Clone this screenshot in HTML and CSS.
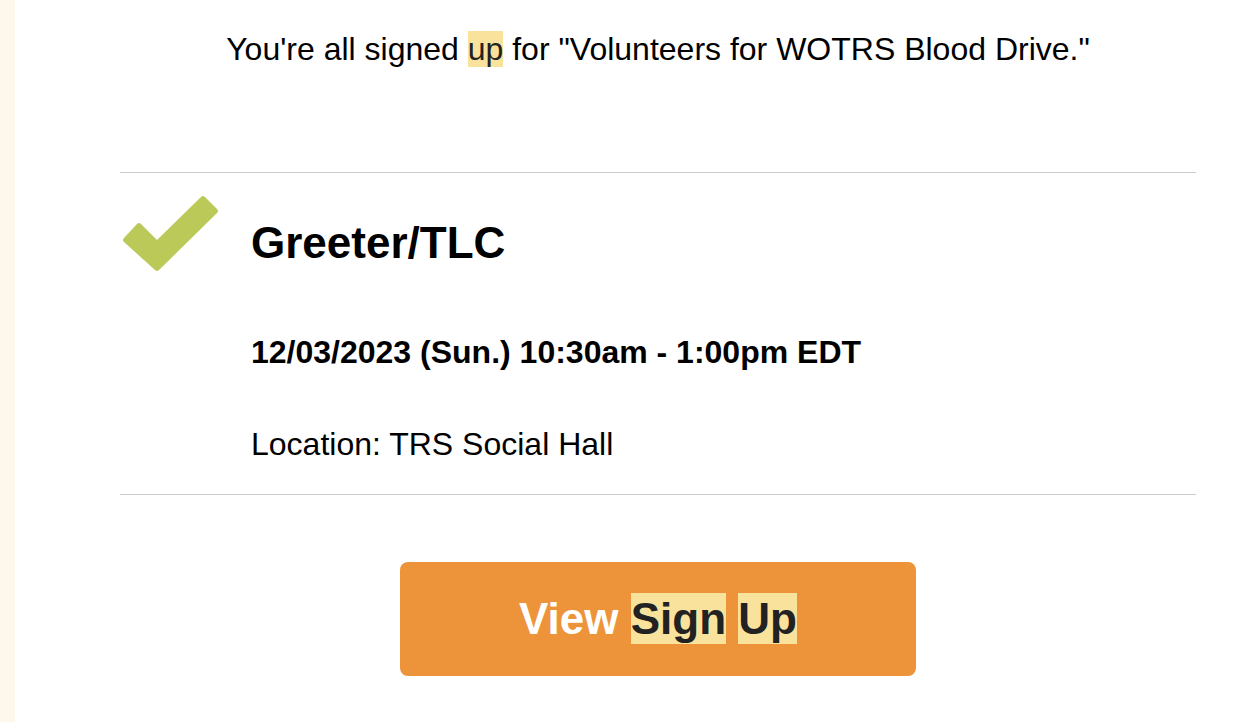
FILE: index.html
```html
<!DOCTYPE html>
<html lang="en">

<head>
  <meta charset="UTF-8">
  <title>Signup Confirmation</title>
  <link rel="stylesheet" href="styles.css">
</head>

<body>
  <div class="page">
    <main class="mail">
      <p class="intro">You're all signed <mark>up</mark> for "Volunteers for WOTRS Blood Drive."</p>

      <section class="slot">
        <div class="check">
          <svg width="100" height="80" viewBox="0 0 100 80">
            <path d="M3 45 L16 31 Q18 29 20 31 L36 47 L80 4 Q82 2 84 4 L96 16 Q98 18 96 20 L38 77 Q36 79 34 77 L3 49 Q1 47 3 45 Z" fill="#bac957" />
          </svg>
        </div>
        <div class="slot-info">
          <h2>Greeter/TLC</h2>
          <p class="when">12/03/2023 (Sun.) 10:30am - 1:00pm EDT</p>
          <p class="where">Location: TRS Social Hall</p>
        </div>
      </section>

      <div class="actions">
        <a href="#" class="btn"><span>View <mark>Sign</mark> <mark>Up</mark></span></a>
      </div>
    </main>
  </div>
</body>

</html>
```

FILE: styles.css
```css
/* Basic Reset */
* {
  margin: 0;
  padding: 0;
  box-sizing: border-box;
}

body {
  font-family: 'Liberation Sans', Arial, sans-serif;
  background-color: #fff;
  color: #000;
}

.page {
  border-left: 15px solid #fdf8eb;
  min-height: 722px;
}

.mail {
  margin-left: 105px;
  width: 1076px;
}

mark {
  background-color: #f9e39c;
  color: #222;
}

/* Intro line */
.intro {
  text-align: center;
  font-size: 32px;
  line-height: 36px;
  padding-top: 31px;
  padding-bottom: 105px;
}

/* Slot row */
.slot {
  display: flex;
  border-top: 1px solid #cbcbcb;
  border-bottom: 1px solid #cbcbcb;
  padding: 0 0 32px 1px;
}

.check {
  width: 130px;
  flex-shrink: 0;
  padding-top: 20px;
}

.check svg {
  display: block;
}

.slot-info h2 {
  font-size: 44px;
  font-weight: bold;
  line-height: 50px;
  margin-top: 45px;
}

.when {
  font-size: 32px;
  font-weight: bold;
  line-height: 36px;
  margin-top: 66px;
}

.where {
  font-size: 32px;
  line-height: 36px;
  margin-top: 56px;
}

/* Button */
.actions {
  display: flex;
  justify-content: center;
  padding-top: 67px;
}

.btn {
  display: flex;
  align-items: center;
  justify-content: center;
  width: 516px;
  height: 114px;
  background-color: #ed933a;
  border-radius: 8px;
  color: #fff;
  font-size: 44px;
  font-weight: bold;
  text-decoration: none;
}

.btn mark {
  padding: 1px 0;
}
```
